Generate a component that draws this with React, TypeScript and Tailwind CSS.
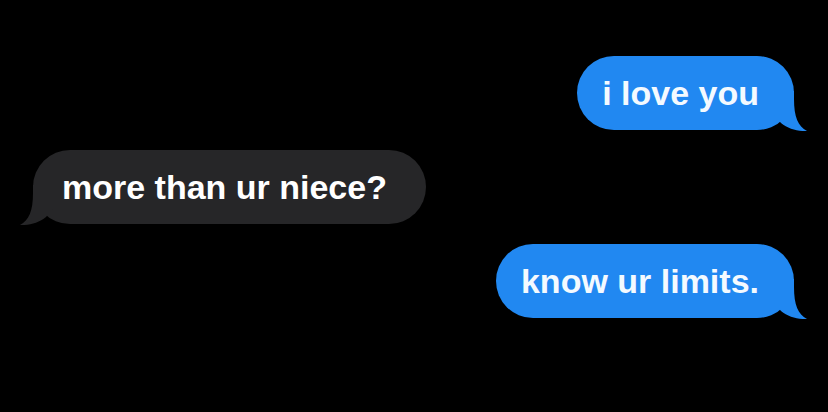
import React from "react";

function Tail({ color, side }: { color: string; side: "left" | "right" }) {
  return (
    <svg
      width="34"
      height="40"
      viewBox="0 0 34 40"
      className={
        side === "right"
          ? "absolute right-[-14px] bottom-[-1px]"
          : "absolute left-[-14px] bottom-[-1px] -scale-x-100"
      }
    >
      <path
        d="M20 0 L20 8 C20 26 24 35 33 40 C24 40.5 14 38 7 32 L0 24 L0 0 Z"
        fill={color}
      />
    </svg>
  );
}

function Bubble({
  text,
  side,
}: {
  text: string;
  side: "left" | "right";
}) {
  const blue = side === "right";
  const color = blue ? "#2188f1" : "#262628";
  return (
    <div
      className={
        blue
          ? "relative self-end h-[74px] flex items-center rounded-[37px] bg-[#2188f1] pl-[25px] pr-[35px] text-[#f4faff]"
          : "relative self-start h-[74px] flex items-center rounded-[37px] bg-[#262628] pl-[29px] pr-[39px] text-white"
      }
    >
      <Tail color={color} side={side} />
      <span className="relative text-[34px] font-bold leading-none tracking-[0px]">
        {text}
      </span>
    </div>
  );
}

export default function App() {
  return (
    <div
      className="w-[828px] h-[412px] bg-black flex flex-col gap-[20px] pt-[56px] pl-[33px] pr-[34px] overflow-hidden"
      style={{ fontFamily: '"Liberation Sans", Arial, sans-serif' }}
    >
      <Bubble text="i love you" side="right" />
      <Bubble text="more than ur niece?" side="left" />
      <Bubble text="know ur limits." side="right" />
    </div>
  );
}
